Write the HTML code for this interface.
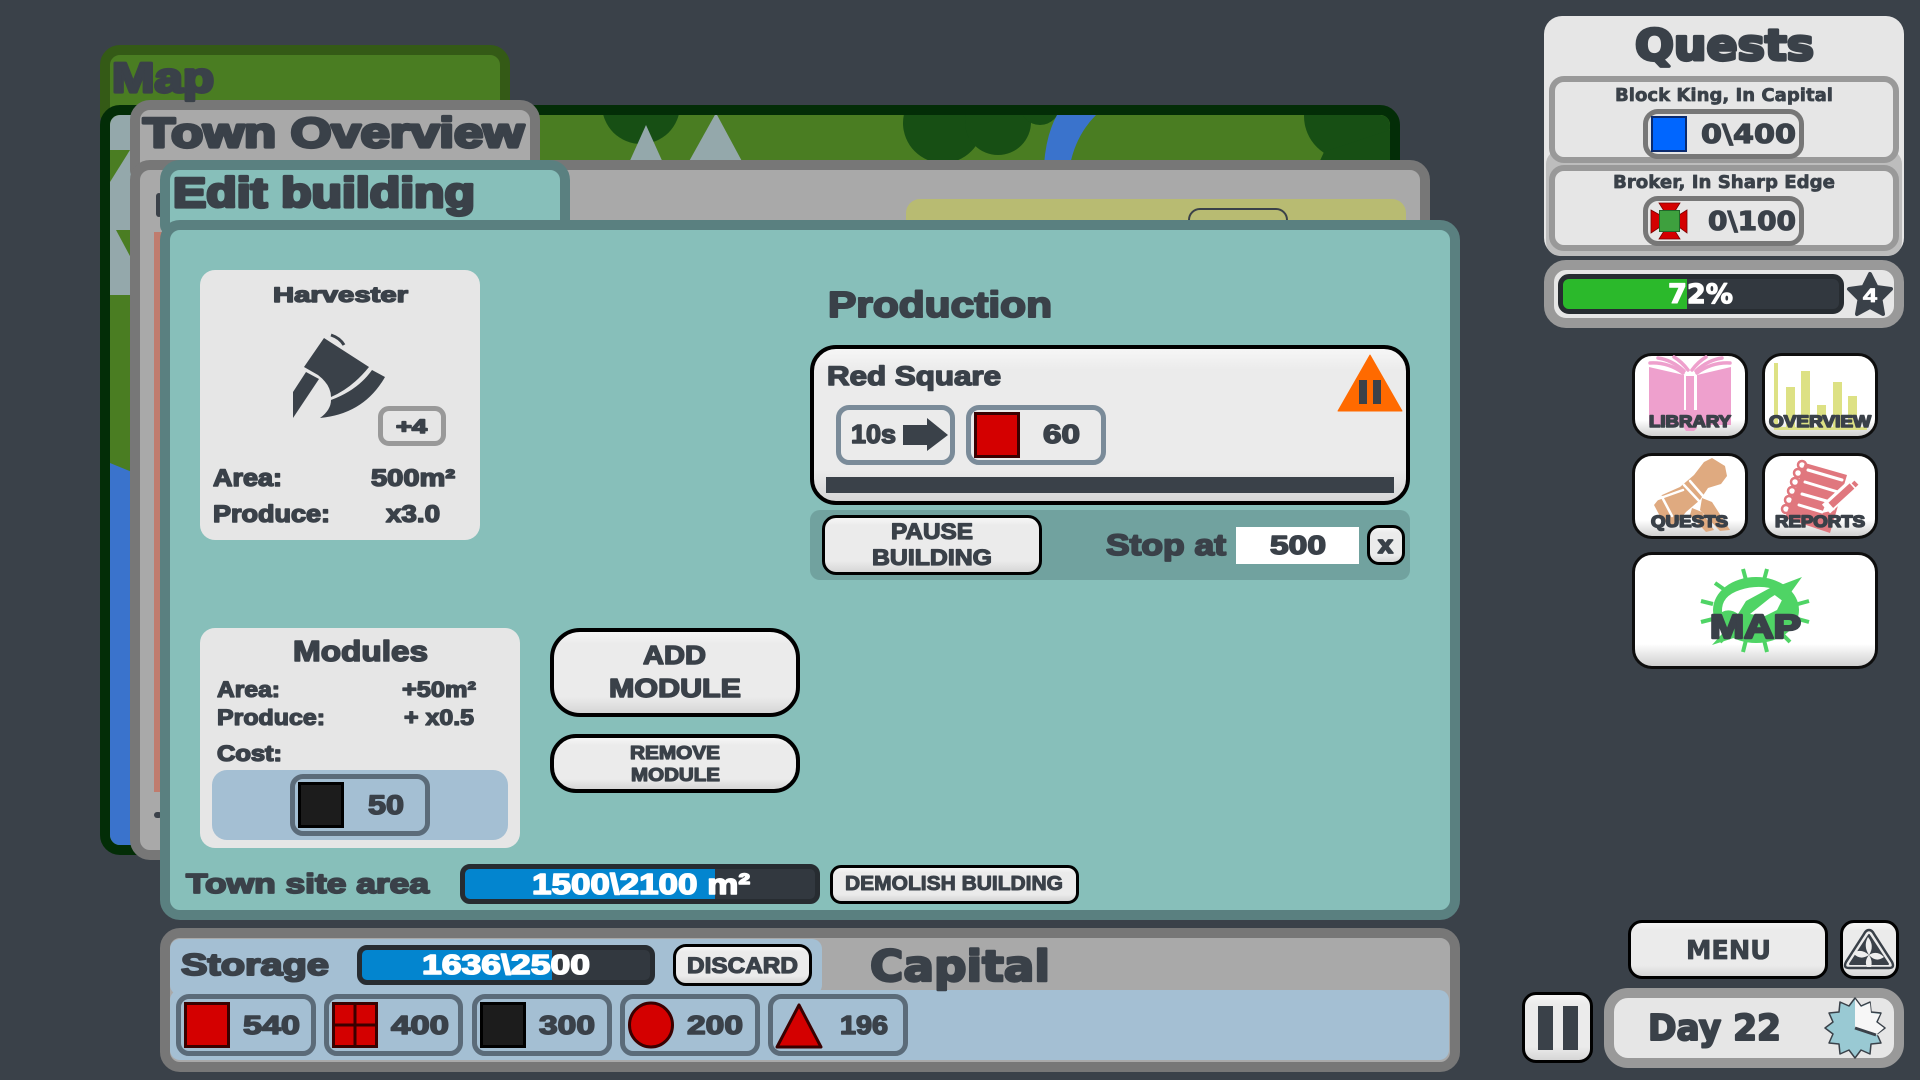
<!DOCTYPE html>
<html lang="en"><head><meta charset="utf-8"><title>Edit building</title>
<style>
html,body{margin:0;padding:0;width:1920px;height:1080px;overflow:hidden;background:#3a4149}
.a,.p,.b,.g{position:absolute;box-sizing:border-box}
.p{border-style:solid;border-width:10px;border-radius:20px}
.tab{border-bottom-left-radius:10px;border-bottom-right-radius:0}
.b{border:4px solid #000;border-radius:14px;background:linear-gradient(#f6f6f6 0,#ebebeb 14%,#ebebeb 80%,#d6d6d6 100%)}
.i{border:3px solid #0e0e0e;border-radius:20px;background:linear-gradient(#fff 0,#fff 80%,#d0d0d0 100%)}
.g{border:5px solid;border-radius:13px}
.bar{border:5px solid #272c31;border-radius:10px;background:#32383f;overflow:hidden}
.bar div{height:100%}
svg.o{position:absolute;left:0;top:0}
text{font-family:"Liberation Sans",sans-serif;font-weight:700;fill:#3a4149;stroke:#3a4149;stroke-linejoin:round;paint-order:stroke}
text.d{font-family:"DejaVu Sans",sans-serif}
text.w{fill:#fff;stroke:#fff}
</style></head><body>

<!-- Map -->
<div class="p tab" style="left:100px;top:45px;width:410px;height:80px;background:#4a7d22;border-color:#345a16"></div>
<div class="p" style="left:100px;top:105px;width:1300px;height:750px;background:#4a7d22;border-color:#032d07;overflow:hidden">
<svg width="1280" height="730" viewBox="110 115 1280 730" style="display:block">
<rect x="110" y="115" width="1280" height="730" fill="#4a7d22"/>
<rect x="110" y="115" width="22" height="180" fill="#94a8ab"/>
<polygon points="110,150 130,150 110,182" fill="#4a7d22"/>
<polygon points="116,230 131,230 131,258" fill="#4a7d22"/>
<polygon points="110,463 132,472 132,845 110,845" fill="#3a73cc"/>
<circle cx="641" cy="105" r="39" fill="#174f14"/>
<circle cx="943" cy="123" r="40" fill="#174f14"/><circle cx="998" cy="122" r="33" fill="#174f14"/><circle cx="1040" cy="105" r="20" fill="#174f14"/>
<circle cx="1348" cy="116" r="44" fill="#174f14"/><polygon points="1324,152 1390,130 1390,165 1318,165" fill="#174f14"/>
<polygon points="646,125 628,165 664,165" fill="#94a8ab"/>
<polygon points="716,113 687,165 744,165" fill="#94a8ab"/>
<path d="M1057,115 Q1046,135 1044,165 L1070,165 Q1076,135 1096,115 Z" fill="#3a73cc"/>
</svg></div>

<!-- Town overview -->
<div class="p tab" style="left:130px;top:100px;width:410px;height:80px;background:#a9a9a9;border-color:#777"></div>
<div class="p" style="left:130px;top:160px;width:1300px;height:700px;background:#a9a9a9;border-color:#777"></div>
<div class="a" style="left:154px;top:232px;width:10px;height:560px;background:#c07c6e"></div>
<div class="a" style="left:156px;top:193px;width:6px;height:24px;background:#3a4149;border-radius:3px"></div>
<div class="a" style="left:154px;top:812px;width:8px;height:6px;background:#3a4149;border-radius:3px"></div>
<div class="a" style="left:906px;top:199px;width:500px;height:60px;background:#b8bb72;border-radius:14px"></div>
<div class="a" style="left:1188px;top:208px;width:100px;height:40px;border:2px solid #3a4149;border-radius:12px;box-sizing:border-box"></div>

<!-- Edit building -->
<div class="p tab" style="left:160px;top:160px;width:410px;height:75px;background:#87bfba;border-color:#5a8080"></div>
<div class="p" style="left:160px;top:220px;width:1300px;height:700px;background:#87bfba;border-color:#5a8080"></div>

<!-- Harvester card -->
<div class="a" style="left:200px;top:270px;width:280px;height:270px;background:#e6e6e6;border-radius:15px"></div>
<div class="a" style="left:378px;top:406px;width:68px;height:40px;border:5px solid #999;border-radius:11px;box-sizing:border-box"></div>

<!-- Modules card -->
<div class="a" style="left:200px;top:628px;width:320px;height:220px;background:#e6e6e6;border-radius:15px"></div>
<div class="a" style="left:212px;top:770px;width:296px;height:70px;background:#a4bfd3;border-radius:15px"></div>
<div class="g" style="left:290px;top:774px;width:140px;height:62px;border-color:#5b6b79"></div>
<div class="a" style="left:298px;top:782px;width:46px;height:46px;background:#1c1c1c;border:3px solid #000;box-sizing:border-box"></div>
<div class="b" style="left:550px;top:628px;width:250px;height:89px;border-radius:30px"></div>
<div class="b" style="left:550px;top:734px;width:250px;height:59px;border-radius:26px"></div>

<!-- Production -->
<div class="b" style="left:810px;top:345px;width:600px;height:160px;border-radius:26px"></div>
<div class="g" style="left:836px;top:405px;width:119px;height:60px;border-color:#7a8b99"></div>
<div class="g" style="left:966px;top:405px;width:140px;height:60px;border-color:#7a8b99"></div>
<div class="a" style="left:974px;top:412px;width:46px;height:46px;background:#d40000;border:3px solid #3a0000;box-sizing:border-box"></div>
<div class="a" style="left:826px;top:477px;width:568px;height:16px;background:#3a4149"></div>
<div class="a" style="left:810px;top:510px;width:600px;height:70px;background:#71a29f;border-radius:10px"></div>
<div class="b" style="left:822px;top:515px;width:220px;height:60px;border-width:3px"></div>
<div class="a" style="left:1236px;top:527px;width:123px;height:37px;background:#fff"></div>
<div class="b" style="left:1367px;top:525px;width:38px;height:40px;border-radius:12px;border-width:3px"></div>

<!-- Town site bar -->
<div class="a bar" style="left:460px;top:864px;width:360px;height:40px"><div style="width:250px;background:#0385cf"></div></div>
<div class="b" style="left:830px;top:865px;width:249px;height:39px;border-width:3px;border-radius:11px"></div>

<!-- Bottom storage -->
<div class="p" style="left:160px;top:928px;width:1300px;height:144px;background:#a9a9a9;border-color:#777"></div>
<div class="a" style="left:170px;top:990px;width:1279px;height:70px;background:#a4bfd3;border-radius:10px"></div>
<div class="a" style="left:170px;top:939px;width:652px;height:56px;background:#a4bfd3;border-radius:10px"></div>
<div class="a bar" style="left:357px;top:945px;width:298px;height:40px"><div style="width:190px;background:#0385cf"></div></div>
<div class="b" style="left:673px;top:944px;width:139px;height:42px;border-width:3px;border-radius:13px"></div>
<div class="g" style="left:176px;top:994px;width:140px;height:62px;border-color:#5b6b79"></div>
<div class="g" style="left:324px;top:994px;width:139px;height:62px;border-color:#5b6b79"></div>
<div class="g" style="left:472px;top:994px;width:140px;height:62px;border-color:#5b6b79"></div>
<div class="g" style="left:620px;top:994px;width:140px;height:62px;border-color:#5b6b79"></div>
<div class="g" style="left:768px;top:994px;width:140px;height:62px;border-color:#5b6b79"></div>

<!-- Quests -->
<div class="a" style="left:1544px;top:16px;width:360px;height:240px;background:#e6e6e6;border-radius:18px"></div>
<div class="a" style="left:1546px;top:150px;width:356px;height:106px;background:#bdbdbd;border-radius:14px"></div>
<div class="a" style="left:1549px;top:76px;width:350px;height:87px;background:#e6e6e6;border:6px solid #999;border-radius:15px;box-sizing:border-box"></div>
<div class="a" style="left:1549px;top:165px;width:350px;height:86px;background:#e6e6e6;border:6px solid #999;border-radius:15px;box-sizing:border-box"></div>
<div class="g" style="left:1643px;top:109px;width:161px;height:50px;border-color:#777;border-radius:15px"></div>
<div class="g" style="left:1643px;top:196px;width:161px;height:50px;border-color:#777;border-radius:15px"></div>
<div class="a" style="left:1651px;top:116px;width:36px;height:36px;background:#0066ff;border:2px solid #0a2a6e;box-sizing:border-box"></div>

<!-- XP -->
<div class="p" style="left:1544px;top:260px;width:360px;height:68px;background:#e6e6e6;border-color:#999;border-radius:22px"></div>
<div class="a bar" style="left:1558px;top:274px;width:286px;height:40px;border-radius:11px"><div style="width:124px;background:#2bb92b"></div></div>

<!-- Right icon buttons -->
<div class="b i" style="left:1632px;top:353px;width:116px;height:86px"></div>
<div class="b i" style="left:1762px;top:353px;width:116px;height:86px"></div>
<div class="b i" style="left:1632px;top:453px;width:116px;height:86px"></div>
<div class="b i" style="left:1762px;top:453px;width:116px;height:86px"></div>
<div class="b i" style="left:1632px;top:552px;width:246px;height:117px"></div>

<!-- Menu etc -->
<div class="b" style="left:1628px;top:920px;width:200px;height:59px;border-width:3px"></div>
<div class="b" style="left:1840px;top:920px;width:59px;height:59px;border-width:3px"></div>
<div class="b" style="left:1522px;top:992px;width:71px;height:71px;border-width:3px"></div>
<div class="a" style="left:1538px;top:1006px;width:15px;height:44px;background:#3a4149"></div>
<div class="a" style="left:1563px;top:1006px;width:15px;height:44px;background:#3a4149"></div>
<div class="p" style="left:1604px;top:988px;width:300px;height:80px;background:#e6e6e6;border-color:#999;border-radius:24px"></div>

<svg class="o" width="1920" height="1080" viewBox="0 0 1920 1080">
<!-- Titles -->
<text x="112" y="92" font-size="42" stroke-width="3.200" textLength="102" lengthAdjust="spacingAndGlyphs">Map</text>
<text x="143" y="147" font-size="42" stroke-width="3.200" textLength="381" lengthAdjust="spacingAndGlyphs">Town Overview</text>
<text x="173" y="207" font-size="42" stroke-width="3.200" textLength="302" lengthAdjust="spacingAndGlyphs">Edit building</text>

<!-- Harvester -->
<text x="273" y="302" font-size="21" stroke-width="1.400" textLength="135" lengthAdjust="spacingAndGlyphs">Harvester</text>
<g fill="#3a4149">
<path d="M324,338 L369,367 Q352,388 331,397 Q331,385 318,375 L304,367 Z"/>
<path d="M372,370 L385,377 Q364,414 320,418 Q331,410 331,400 Q358,390 372,370 Z"/>
<path d="M306,372 L319,379 L293,418 L293,392 Z"/>
<path d="M331,335 Q340,338 344,345" fill="none" stroke="#3a4149" stroke-width="3"/>
</g>
<text x="396" y="433" font-size="19" stroke-width="1.500" textLength="31" lengthAdjust="spacingAndGlyphs">+4</text>
<text x="213" y="486" font-size="24" stroke-width="1.500" textLength="69" lengthAdjust="spacingAndGlyphs">Area:</text>
<text x="371" y="486" font-size="24" stroke-width="1.500" textLength="84" lengthAdjust="spacingAndGlyphs">500m²</text>
<text x="213" y="522" font-size="24" stroke-width="1.500" textLength="117" lengthAdjust="spacingAndGlyphs">Produce:</text>
<text x="386" y="522" font-size="24" stroke-width="1.500" textLength="54" lengthAdjust="spacingAndGlyphs">x3.0</text>

<!-- Modules -->
<text x="293" y="661" font-size="29" stroke-width="1.600" textLength="135" lengthAdjust="spacingAndGlyphs">Modules</text>
<text x="217" y="697" font-size="22" stroke-width="1.300" textLength="63" lengthAdjust="spacingAndGlyphs">Area:</text>
<text x="402" y="697" font-size="22" stroke-width="1.300" textLength="74" lengthAdjust="spacingAndGlyphs">+50m²</text>
<text x="217" y="725" font-size="22" stroke-width="1.300" textLength="108" lengthAdjust="spacingAndGlyphs">Produce:</text>
<text x="404" y="725" font-size="22" stroke-width="1.300" textLength="70" lengthAdjust="spacingAndGlyphs">+ x0.5</text>
<text x="217" y="761" font-size="22" stroke-width="1.500" textLength="65" lengthAdjust="spacingAndGlyphs">Cost:</text>
<text x="368" y="814" font-size="27" stroke-width="1.500" textLength="36" lengthAdjust="spacingAndGlyphs">50</text>
<text x="643" y="664" font-size="26" stroke-width="1.500" textLength="63" lengthAdjust="spacingAndGlyphs">ADD</text>
<text x="609" y="697" font-size="26" stroke-width="1.500" textLength="132" lengthAdjust="spacingAndGlyphs">MODULE</text>
<text x="630" y="759" font-size="18" stroke-width="1.200" textLength="90" lengthAdjust="spacingAndGlyphs">REMOVE</text>
<text x="631" y="781" font-size="18" stroke-width="1.200" textLength="89" lengthAdjust="spacingAndGlyphs">MODULE</text>
<text x="186" y="893" font-size="28" stroke-width="1.800" textLength="243" lengthAdjust="spacingAndGlyphs">Town site area</text>
<text class="w" x="532" y="894" font-size="29" stroke-width="1.500" textLength="218" lengthAdjust="spacingAndGlyphs">1500\2100 m²</text>
<text x="845" y="890" font-size="20" stroke-width="1" textLength="218" lengthAdjust="spacingAndGlyphs">DEMOLISH BUILDING</text>

<!-- Production -->
<text x="828" y="317" font-size="36" stroke-width="2" textLength="224" lengthAdjust="spacingAndGlyphs">Production</text>
<text x="827" y="385" font-size="27" stroke-width="1.500" textLength="174" lengthAdjust="spacingAndGlyphs">Red Square</text>
<polygon points="1370,355 1402,411 1338,411" fill="#ff6a00" stroke="#ff6a00" stroke-width="1" stroke-linejoin="round"/>
<rect x="1359" y="380" width="8" height="24" fill="#3a4149"/><rect x="1373" y="380" width="8" height="24" fill="#3a4149"/>
<text x="851" y="443" font-size="26" stroke-width="1.500" textLength="45" lengthAdjust="spacingAndGlyphs">10s</text>
<polygon points="903,425 927,425 927,418 948,435 927,451 927,445 903,445" fill="#3a4149"/>
<text x="1043" y="443" font-size="26" stroke-width="1.500" textLength="37" lengthAdjust="spacingAndGlyphs">60</text>
<text x="891" y="539" font-size="22" stroke-width="1.200" textLength="82" lengthAdjust="spacingAndGlyphs">PAUSE</text>
<text x="872" y="565" font-size="22" stroke-width="1.200" textLength="120" lengthAdjust="spacingAndGlyphs">BUILDING</text>
<text x="1106" y="555" font-size="30" stroke-width="1.800" textLength="120" lengthAdjust="spacingAndGlyphs">Stop at</text>
<text x="1270" y="554" font-size="26" stroke-width="1.500" textLength="56" lengthAdjust="spacingAndGlyphs">500</text>
<text x="1378" y="553" font-size="24" stroke-width="1.800" textLength="15" lengthAdjust="spacingAndGlyphs">x</text>

<!-- Storage -->
<text x="181" y="975" font-size="31" stroke-width="2" textLength="148" lengthAdjust="spacingAndGlyphs">Storage</text>
<text class="w" x="422" y="974" font-size="28" stroke-width="1.500" textLength="168" lengthAdjust="spacingAndGlyphs">1636\2500</text>
<text x="687" y="973" font-size="22" stroke-width="1.200" textLength="111" lengthAdjust="spacingAndGlyphs">DISCARD</text>
<text class="d" x="870" y="981" font-size="43" stroke-width="2.500" textLength="180" lengthAdjust="spacingAndGlyphs">Capital</text>

<rect x="185.500" y="1003.500" width="43" height="43" fill="#d40000" stroke="#3a0000" stroke-width="3"/>
<rect x="333.500" y="1003.500" width="43" height="43" fill="#d40000" stroke="#3a0000" stroke-width="3"/>
<path d="M355,1003 V1047 M333,1025 H377" stroke="#3a0000" stroke-width="3" fill="none"/>
<rect x="481.500" y="1003.500" width="43" height="43" fill="#1c1c1c" stroke="#000" stroke-width="3"/>
<ellipse cx="651" cy="1025" rx="21.500" ry="22" fill="#d40000" stroke="#3a0000" stroke-width="3"/>
<polygon points="799,1005 821,1047 777,1047" fill="#d40000" stroke="#3a0000" stroke-width="3" stroke-linejoin="round"/>
<text x="243" y="1034" font-size="26" stroke-width="1.500" textLength="57" lengthAdjust="spacingAndGlyphs">540</text>
<text x="391" y="1034" font-size="26" stroke-width="1.500" textLength="58" lengthAdjust="spacingAndGlyphs">400</text>
<text x="539" y="1034" font-size="26" stroke-width="1.500" textLength="56" lengthAdjust="spacingAndGlyphs">300</text>
<text x="687" y="1034" font-size="26" stroke-width="1.500" textLength="56" lengthAdjust="spacingAndGlyphs">200</text>
<text x="840" y="1034" font-size="26" stroke-width="1.500" textLength="48" lengthAdjust="spacingAndGlyphs">196</text>

<!-- Quests -->
<text class="d" x="1635" y="60" font-size="43" stroke-width="3.200" textLength="179" lengthAdjust="spacingAndGlyphs">Quests</text>
<text class="d" x="1615" y="101" font-size="18" stroke-width=".7" textLength="218" lengthAdjust="spacingAndGlyphs">Block King, In Capital</text>
<text class="d" x="1701" y="143" font-size="26" stroke-width="1.200" textLength="95" lengthAdjust="spacingAndGlyphs">0\400</text>
<text class="d" x="1613" y="188" font-size="18" stroke-width=".7" textLength="222" lengthAdjust="spacingAndGlyphs">Broker, In Sharp Edge</text>
<text class="d" x="1708" y="230" font-size="26" stroke-width="1.200" textLength="88" lengthAdjust="spacingAndGlyphs">0\100</text>
<g fill="#d40000" stroke="#7a0000" stroke-width=".8">
<polygon points="1659,203 1680,203 1675,211 1664,211"/><polygon points="1659,239 1680,239 1675,231 1664,231"/>
<polygon points="1651,210 1660,215 1660,227 1651,233"/><polygon points="1687,210 1679,215 1679,227 1687,233"/>
</g>
<rect x="1659.500" y="210.500" width="20" height="21" fill="#3ea03e" stroke="#22662a" stroke-width="1"/>

<!-- XP -->
<text class="d w" x="1668" y="303" font-size="27" stroke-width="1.200" textLength="65" lengthAdjust="spacingAndGlyphs">72%</text>
<polygon points="1870,274 1876.500,287 1891,289 1880.500,299.500 1883,314 1870,307 1857,314 1859.500,299.500 1849,289 1863.500,287" fill="#3a4149" stroke="#3a4149" stroke-width="4" stroke-linejoin="round"/>
<text class="w" x="1863" y="302" font-size="19" stroke-width=".8" textLength="14" lengthAdjust="spacingAndGlyphs">4</text>

<!-- Library icon -->
<g fill="#eea0cd">
<polygon points="1649,367 1684,375 1684,425 1649,425"/>
<polygon points="1731,367 1697,375 1697,425 1731,425"/>
<polygon points="1684,410 1697,410 1697,428 1694,431 1686,431 1684,428"/>
<rect x="1686" y="376" width="8" height="34"/>
</g>
<g fill="none" stroke="#eea0cd" stroke-width="3.500" stroke-linecap="round">
<path d="M1650,363 Q1668,362 1683,373"/><path d="M1658,358 Q1672,360 1684,371"/><path d="M1674,357 Q1682,362 1688,370"/>
<path d="M1730,363 Q1712,362 1697,373"/><path d="M1722,358 Q1708,360 1696,371"/><path d="M1706,357 Q1698,362 1692,370"/>
</g>

<!-- Overview icon -->
<g fill="#dde184">
<rect x="1774" y="363" width="4" height="67"/><rect x="1786" y="387" width="9" height="40"/><rect x="1801" y="371" width="9" height="56"/>
<rect x="1817" y="405" width="9" height="22"/><rect x="1833" y="382" width="9" height="45"/><rect x="1848" y="396" width="9" height="31"/>
<rect x="1774" y="427" width="93" height="3"/>
</g>

<!-- Quests scroll -->
<g fill="#dfaa80">
<polygon points="1704,462 1712,458 1725,466 1727,476 1721,484 1708,488 1700,500 1686,512 1674,527 1662,520 1654,505 1662,495 1680,487 1694,475"/>
<polygon points="1702,498 1712,502 1730,530 1720,531 1700,510"/>
<polygon points="1692,508 1702,512 1714,530 1706,532 1690,515"/>
</g>
<g fill="none" stroke="#fff" stroke-width="2.500" stroke-linecap="round">
<path d="M1684,485 L1699,501"/><path d="M1690,481 L1703,496"/><path d="M1662,497 L1672,516"/><path d="M1655,500 L1683,490"/>
</g>

<!-- Reports icon -->
<polygon points="1805,463 1847,475 1830,533 1785,518" fill="#e0777e"/>
<g fill="none" stroke="#e0777e" stroke-width="2.500">
<circle cx="1802" cy="465" r="4"/><circle cx="1798" cy="473" r="4"/><circle cx="1795" cy="482" r="4"/><circle cx="1792" cy="491" r="4"/><circle cx="1789" cy="500" r="4"/><circle cx="1786" cy="509" r="4"/>
</g>
<g stroke="#fff" stroke-width="3" stroke-linecap="round">
<path d="M1808,470 L1842,480"/><path d="M1805,482 L1838,492"/><path d="M1802,494 L1830,502"/><path d="M1799,505 L1822,512"/>
</g>
<path d="M1853,484 L1826,509" stroke="#fff" stroke-width="12" stroke-linecap="butt"/>
<path d="M1852,486 L1829,507" stroke="#e0777e" stroke-width="7"/>
<path d="M1853,482 L1857,486" stroke="#e0777e" stroke-width="4"/>
<polygon points="1827,501 1835,510 1822,513" fill="#fff"/>

<!-- Map icon -->
<g stroke="#4fd465" stroke-width="4">
<path d="M1743,569 L1746,580"/><path d="M1767,569 L1764,580"/><path d="M1715,583 L1725,590"/><path d="M1795,583 L1786,590"/>
<path d="M1701,601 L1713,604"/><path d="M1809,601 L1798,604"/><path d="M1701,622 L1713,619"/><path d="M1809,622 L1798,619"/>
<path d="M1743,652 L1746,640"/><path d="M1767,652 L1764,640"/><path d="M1720,642 L1728,634"/><path d="M1790,642 L1782,634"/>
</g>
<ellipse cx="1756" cy="610" rx="43" ry="33" fill="#4fd465"/>
<path d="M1722,612 Q1721,596 1740,590 Q1755,585 1770,588 L1746,601 L1738,614 Q1730,608 1722,612 Z" fill="#fff"/>
<polygon points="1789,586 1777,610 1765,616 1750,614 1770,598" fill="#fff"/>
<polygon points="1802,577 1768,590 1784,602" fill="#4fd465"/>
<polygon points="1712,645 1730,625 1746,634" fill="#4fd465"/>
<text x="1649" y="427" font-size="17" stroke-width="1.600" textLength="82" lengthAdjust="spacingAndGlyphs">LIBRARY</text>
<text x="1769" y="427" font-size="17" stroke-width="1.600" textLength="102" lengthAdjust="spacingAndGlyphs">OVERVIEW</text>
<text x="1651" y="527" font-size="17" stroke-width="1.600" textLength="77" lengthAdjust="spacingAndGlyphs">QUESTS</text>
<text x="1775" y="527" font-size="17" stroke-width="1.600" textLength="90" lengthAdjust="spacingAndGlyphs">REPORTS</text>
<text x="1710" y="638" font-size="33" stroke-width="2.500" textLength="91" lengthAdjust="spacingAndGlyphs">MAP</text>

<!-- Menu / Day -->
<text class="d" x="1686" y="959" font-size="26" stroke-width=".8" textLength="85" lengthAdjust="spacingAndGlyphs">MENU</text>
<path d="M1869,930 Q1872,930 1874,934 L1892,962 Q1895,968 1889,968 L1849,968 Q1843,968 1846,962 L1864,934 Q1866,930 1869,930 Z" fill="none" stroke="#3a4149" stroke-width="2.500"/>
<path d="M1869,935 L1888,964 L1850,964 Z" fill="#3a4149" stroke="#3a4149" stroke-width="2" stroke-linejoin="round"/>
<g fill="#eee"><path d="M1869,955 Q1863,946 1868,937 Q1875,946 1869,955 Z"/><path d="M1869,955 Q1861,948 1853,953 Q1860,961 1869,955 Z"/><path d="M1869,955 Q1877,950 1884,957 Q1876,963 1869,955 Z"/><path d="M1869,955 Q1864,961 1867,967 L1871,967 Q1873,961 1869,955 Z"/></g>
<text class="d" x="1648" y="1040" font-size="36" stroke-width="2" textLength="133" lengthAdjust="spacingAndGlyphs">Day 22</text>
<g transform="translate(1855,1028)">
<polygon points="0,-30 6,-22 15,-26 16,-16 26,-15 22,-6 30,0 22,6 26,15 16,16 15,26 6,22 0,30 -6,22 -15,26 -16,16 -26,15 -22,6 -30,0 -22,-6 -26,-15 -16,-16 -15,-26 -6,-22" fill="#99c9d3" stroke="#3a4149" stroke-width="1.500" stroke-linejoin="round"/>
<polygon points="0,0 0,-29 6,-21 15,-25 16,-15 25,-14 21,-6 29,0 22,6 25,8" fill="#f7f7f7"/>
<path d="M0,0 L21,7" stroke="#3a4149" stroke-width="3"/>
</g>
</svg>
</body></html>
